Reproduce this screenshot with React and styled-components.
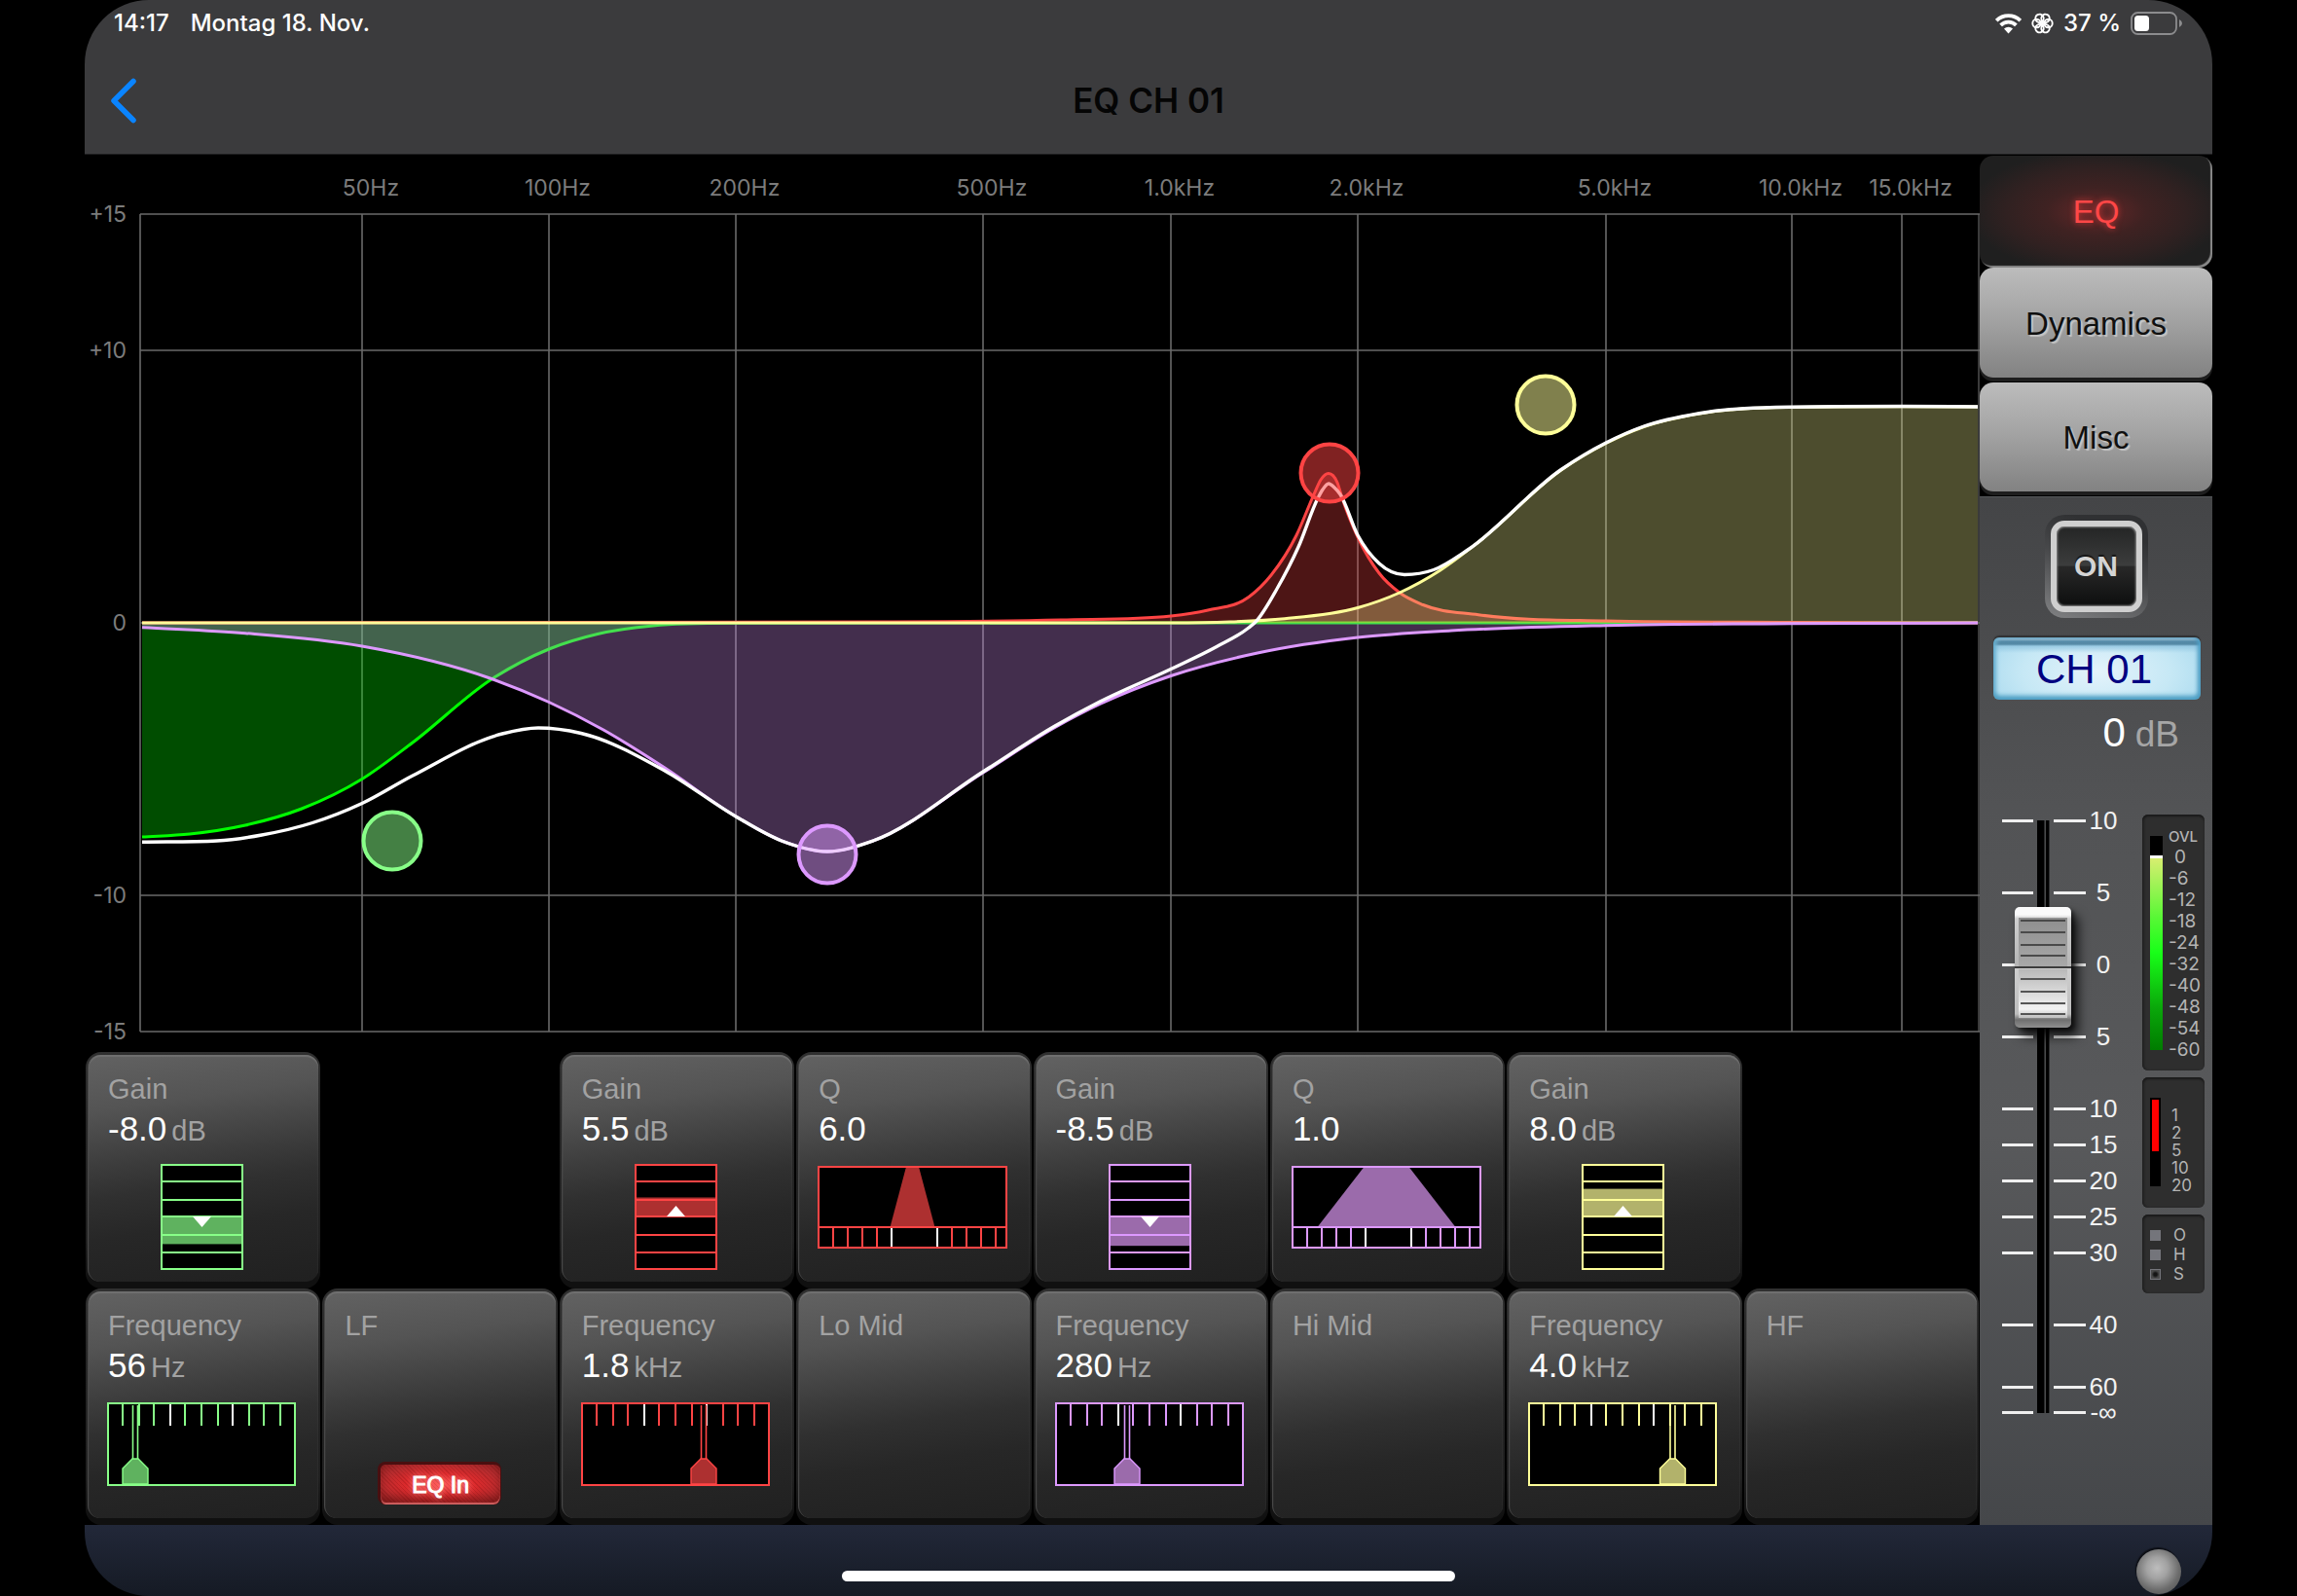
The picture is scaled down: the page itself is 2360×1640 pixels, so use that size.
import React, { useState } from "react";
import styled, { createGlobalStyle, css } from "styled-components";

const SANS = `"Liberation Sans", Arial, Helvetica, sans-serif`;
const SYSTEM = `Inter, Roboto, "Liberation Sans", sans-serif`;

const GREEN = "#88ff88";
const RED = "#ff4444";
const PURPLE = "#dd99ff";
const YELLOW = "#ffff99";

const GlobalStyle = createGlobalStyle`
  * { box-sizing: border-box; }
  body { margin: 0; background: #000; font-family: ${SANS}; }
  button { font-family: inherit; border: 0; padding: 0; cursor: pointer; }
`;

/* ---------- shell ---------- */

const Page = styled.div`
  min-height: 100vh;
  padding: 0 87px;
  background: #000;
  display: flex;
`;

const Device = styled.div`
  flex: 1;
  min-width: 0;
  display: flex;
  flex-direction: column;
  background: #000;
  border-radius: 66px;
  overflow: hidden;
`;

const Header = styled.header`
  background: #3b3b3d;
  border-bottom: 1px solid #1c1c1e;
  color: #fff;
`;

const StatusBar = styled.div`
  height: 48px;
  padding: 0 30px;
  display: flex;
  align-items: center;
  justify-content: space-between;
  font: 500 24px/28px ${SYSTEM};
`;

const StatusGroup = styled.div`
  display: flex;
  align-items: center;
  gap: ${(p) => p.$gap}px;
`;

const NavBar = styled.div`
  height: 110px;
  padding: 0 20px;
  display: grid;
  grid-template-columns: 1fr auto 1fr;
  align-items: center;
`;

const BackButton = styled.button`
  width: 40px;
  height: 60px;
  background: none;
  display: flex;
  align-items: center;
  justify-content: center;
`;

const Title = styled.h1`
  margin: 0;
  color: #050505;
  font: 600 35px/40px ${SYSTEM};
`;

const Main = styled.main`
  display: grid;
  grid-template-columns: minmax(0, 1fr) 239px;
`;

const Workspace = styled.section`
  min-width: 0;
  display: flex;
  flex-direction: column;
`;

const ChartSvg = styled.svg`
  display: block;
  width: 100%;
  height: auto;
  text {
    font: 400 23px ${SYSTEM};
    fill: #7c7c7c;
  }
`;

const Footer = styled.footer`
  flex: 1;
  min-height: 73px;
  padding-right: 32px;
  background: linear-gradient(#222839, #151a24);
  display: grid;
  grid-template-columns: 1fr 630px 1fr;
  align-items: end;
`;

const HomeIndicator = styled.div`
  grid-column: 2;
  height: 11px;
  margin: 0 -16px 15px 16px;
  border-radius: 6px;
  background: #fff;
`;

const Knob = styled.button`
  justify-self: end;
  width: 46px;
  height: 46px;
  margin-bottom: 2px;
  border-radius: 50%;
  background: radial-gradient(circle at 46% 42%, #bdbdbd 0, #a2a2a2 30%, #6c6c6c 62%, #484848 100%);
  box-shadow: -1px -2px 1px #0d0f15;
`;

/* ---------- parameter tiles ---------- */

const Tiles = styled.div`
  display: grid;
  grid-template-columns: repeat(8, minmax(0, 1fr));
  grid-auto-rows: 243px;
`;

const TileFrame = styled.section`
  grid-column: ${(p) => p.$column};
  grid-row: ${(p) => p.$row};
  margin: 0 1px;
  padding: 3px 2px 7px;
  border-radius: 16px;
  background: linear-gradient(#303030, #262626 30%, #202020 80%, #101010 97%);
  display: flex;
`;

const TileFace = styled.div`
  flex: 1;
  min-width: 0;
  padding: 17px 22px 0 20px;
  border-radius: 13px;
  border-left: 1px solid #484848;
  box-shadow: inset 0 2px 1px #707070;
  background: linear-gradient(172deg, #626262 0, #545454 22%, #3c3c3c 44%, #303030 56%, #272727 72%, #202020 100%);
  display: flex;
  flex-direction: column;
`;

const TileLabel = styled.div`
  color: #a2a2a2;
  font-size: 29px;
  line-height: 36px;
`;

const Reading = styled.div`
  display: flex;
  align-items: baseline;
  gap: 5px;
  color: #fff;
  font-size: 35px;
  line-height: 46px;
`;

const Unit = styled.span`
  color: #a2a2a2;
  font-size: 29px;
  line-height: 36px;
`;

const Glyph = styled.svg`
  display: block;
  flex: none;
  align-self: ${(p) => (p.$center ? "center" : "flex-start")};
  margin-top: ${(p) => (p.$center ? 13 : 15)}px;
  margin-left: -1px;
`;

const LampButton = styled.button`
  align-self: center;
  width: 127px;
  height: 44px;
  margin-top: 122px;
  border-radius: 8px;
  border: solid #4a0f10;
  border-width: 3px 1px 0 3px;
  background:
    repeating-linear-gradient(45deg, rgba(90, 0, 0, 0.16) 0 1px, transparent 1px 3px),
    radial-gradient(ellipse at 50% 50%, #ff4a48 0, #e02a2c 38%, #b52c2e 72%, #8c2122 100%);
  box-shadow: inset 0 -2px 1px #d06060, inset 0 -8px 8px rgba(70, 0, 0, 0.35);
  color: #fff;
  font-size: 23px;
  line-height: 38px;
  -webkit-text-stroke: 1px #fff;
  text-shadow: 0 0 7px #ffb0b0;
`;

/* ---------- sidebar ---------- */

const Sidebar = styled.aside`
  display: flex;
  flex-direction: column;
`;

const Tabs = styled.nav`
  padding-top: 1px;
  height: 351px;
  display: grid;
  grid-template-rows: 115px 118px 117px;
  background: #000;
`;

const TabButton = styled.button`
  border-radius: 14px;
  color: #101010;
  font-size: 33px;
  line-height: 40px;
  ${(p) =>
    p.$active
      ? css`
          color: #ff4747;
          text-shadow: 0 0 6px rgba(255, 60, 60, 0.7);
          background: radial-gradient(ellipse at 50% 50%, #652728 0, #3f2222 30%, #302121 55%, #1f1f1f 78%);
          box-shadow: inset -2px -2px 1px #8a8a8a;
        `
      : css`
          margin-bottom: 5px;
          padding-top: 2px;
          text-shadow: 2px 2px 1px rgba(225, 225, 225, 0.6);
          background: linear-gradient(#bcbcbc, #a4a4a4 45%, #828282);
          box-shadow: 0 4px 0 #1e1e1e;
        `}
`;

const Strip = styled.section`
  flex: 1;
  display: flex;
  flex-direction: column;
  background: linear-gradient(#444547, #525355 30%, #58595b 62%, #45474a);
  border-top: 1px solid #55575a;
`;

const OnButton = styled.button`
  align-self: center;
  width: 106px;
  height: 106px;
  margin-top: 18px;
  padding: 6px;
  border-radius: 20px;
  background: linear-gradient(200deg, #303133 20%, #47484a 50%, #818284);
`;

const OnFace = styled.span`
  display: block;
  height: 94px;
  border-radius: 14px;
  border: 6px solid #cfcfcf;
  box-shadow: inset 0 0 2px 1px #8c8c8c;
  background: linear-gradient(#242525, #3c3d3d 49%, #282828 50%, #0d0e0e);
  color: #d4d4d4;
  font-weight: 700;
  font-size: 30px;
  line-height: 82px;
  text-shadow: 0 -2px 1px #151515;
`;

const ChannelName = styled.div`
  height: 64px;
  margin: 20px 12px 0 14px;
  padding-right: 6px;
  border-radius: 6px;
  background:
    linear-gradient(rgba(150, 180, 200, 0.95) 0 2px, rgba(74, 128, 158, 0.9) 4px 7px, rgba(143, 196, 224, 0.8) 9px, transparent 16px),
    radial-gradient(ellipse 60% 100% at 50% 55%, #e4f3fb 0, #c6e8f5 60%, #a8d9ee 100%);
  box-shadow: inset 0 -4px 5px #4d9fc4, inset -3px 0 4px #4f9cc2, inset 3px 0 4px #79b8d4, 0 -2px 1px #303133;
  color: #000080;
  text-align: center;
  font-size: 42px;
  line-height: 66px;
`;

const Level = styled.output`
  display: flex;
  justify-content: flex-end;
  align-items: baseline;
  gap: 10px;
  height: 56px;
  margin-top: 6px;
  padding-right: 34px;
  color: #fff;
  font-size: 42px;
  line-height: 56px;
`;

const LevelUnit = styled.span`
  color: #a6a6a6;
  font-size: 37px;
`;

const Controls = styled.div`
  margin-top: 49px;
  padding-left: 23px;
  padding-right: 8px;
  display: flex;
  justify-content: space-between;
  align-items: flex-start;
`;

const Fader = styled.div`
  display: grid;
  grid-template-columns: 122px;
  align-items: start;
  > * { grid-area: 1 / 1; }
`;

const Scale = styled.ol`
  list-style: none;
  margin: 0;
  padding: 0;
`;

const ScaleRow = styled.li`
  height: 26px;
  margin-top: ${(p) => p.$gap}px;
  display: grid;
  grid-template-columns: 32px 21px 33px 36px;
  align-items: center;
  color: #f2f2f2;
  font-size: 26px;
  line-height: 26px;
  text-align: center;
`;

const Tick = styled.i`
  height: 3px;
  background: #efefef;
  &:nth-child(2) { grid-column: 3; }
`;

const Track = styled.div`
  justify-self: start;
  width: 13px;
  height: 609px;
  margin: 13px 0 0 36px;
  background: linear-gradient(90deg, #000 0 7px, #2a2b2c 7px 8px, #4a4b4c 8px 9px, #000 9px 12px, #2f3031 12px);
`;

const FaderInput = styled.input`
  appearance: none;
  -webkit-appearance: none;
  writing-mode: vertical-lr;
  direction: rtl;
  justify-self: start;
  width: 58px;
  height: 733px;
  margin: -49px 0 -62px 13px;
  background: transparent;
  &::-webkit-slider-runnable-track {
    width: 58px;
    height: 733px;
    background: transparent;
  }
  &::-webkit-slider-thumb {
    appearance: none;
    -webkit-appearance: none;
    width: 58px;
    height: 124px;
    border: 0;
    border-radius: 5px;
    box-shadow: 7px 9px 12px rgba(0, 0, 0, 0.75), 3px 3px 4px rgba(0, 0, 0, 0.5);
    background:
      linear-gradient(#4a4a4a, #4a4a4a) 50% 13px / 46px 2px no-repeat,
      linear-gradient(#4a4a4a, #4a4a4a) 50% 25px / 46px 2px no-repeat,
      linear-gradient(#4a4a4a, #4a4a4a) 50% 38px / 46px 2px no-repeat,
      linear-gradient(#4a4a4a, #4a4a4a) 50% 49px / 46px 2px no-repeat,
      linear-gradient(#3c3c3c, #3c3c3c) 50% 61px / 58px 2px no-repeat,
      linear-gradient(#555, #555) 50% 73px / 46px 2px no-repeat,
      linear-gradient(#555, #555) 50% 86px / 46px 2px no-repeat,
      linear-gradient(#555, #555) 50% 98px / 46px 2px no-repeat,
      linear-gradient(#555, #555) 50% 109px / 46px 2px no-repeat,
      linear-gradient(#8f8f8f, #a8a8a8) 50% 11px / 50px 50px no-repeat,
      linear-gradient(#b8b8b8, #f2f2f2 82%, #bdbdbd) 50% 64px / 50px 50px no-repeat,
      linear-gradient(#fafafa 0 8px, #cfcfcf 12px, #b5b5b5 60px, #cfcfcf 63px, #bdbdbd 110px, #6f6f6f 116px, #8f8f8f);
  }
`;

const Meters = styled.div`
  display: flex;
  flex-direction: column;
  gap: 7px;
  margin-top: 7px;
  width: 64px;
`;

const MeterPanel = styled.div`
  height: ${(p) => p.$height}px;
  padding: ${(p) => p.$top}px 0 0 8px;
  border-radius: 6px;
  background: #2e2e2e;
  box-shadow: inset 0 2px 2px #1b1b1b, inset 2px 0 2px #242424;
  display: grid;
  grid-template-columns: ${(p) => p.$bar}px 1fr;
  column-gap: ${(p) => p.$gap}px;
  align-items: start;
  color: #b4b4b4;
  font-family: ${SYSTEM};
`;

const LevelBar = styled.div`
  height: 220px;
  border-top: 20px solid #000;
  background: linear-gradient(#fff 0 3px, #d8ee70 3px, #58f835 32%, #18ff18 50%, #0aa80a 78%, #007c00);
`;

const ReductionBar = styled.div`
  height: 91px;
  padding: 2px;
  background: #000;
`;

const ReductionFill = styled.div`
  height: 53px;
  background: #ff0000;
`;

const MeterLabels = styled.div`
  display: flex;
  flex-direction: column;
  margin-top: ${(p) => p.$offset}px;
  font-size: ${(p) => p.$size}px;
  line-height: ${(p) => p.$pitch}px;
`;

const Overload = styled.span`
  font-size: 15px;
  font-weight: 500;
  line-height: 20px;
`;

const ZeroMark = styled.span`
  padding-left: 6px;
`;

const Lamps = styled.div`
  display: flex;
  flex-direction: column;
  gap: 9px;
`;

const Lamp = styled.i`
  width: 11px;
  height: 11px;
  background: ${(p) => (p.$off ? "radial-gradient(#151515 25%, #4a4a4a 60%)" : "#74757b")};
  border: ${(p) => (p.$off ? "1px solid #74757b" : "0")};
`;

/* ---------- response chart ---------- */

const FREQUENCIES = [
  [372, "50Hz"], [564, "100Hz"], [756, "200Hz"], [1010, "500Hz"], [1203, "1.0kHz"],
  [1395, "2.0kHz"], [1650, "5.0kHz"], [1841, "10.0kHz"], [1954, "15.0kHz"],
];
const GAINS = [[220, "+15"], [360, "+10"], [640, "0"], [920, "-10"], [1060, "-15"]];

const CURVES = {
  low: [[146, 860], [195, 857], [252, 848], [310, 831], [372, 800.5], [424, 763], [505, 698], [564, 667], [614, 651.5], [671, 643], [756, 640.3], [1203, 640], [2032, 640]],
  hiMid: [[146, 644.7], [252, 650.7], [372, 664], [505, 697.5], [564, 721.5], [620, 750], [683, 789], [756, 839], [803, 864], [850, 875], [897, 864], [1010, 794], [1083, 748], [1130, 723.5], [1203, 694.5], [1292, 671], [1395, 655], [1491, 648], [1650, 642.7], [1841, 640.7], [2032, 640]],
  loMid: [[146, 640], [900, 639], [1090, 637], [1203, 633], [1241, 627], [1283, 613.5], [1306, 591], [1332, 550], [1350, 508], [1357, 493], [1365, 486.5], [1374, 496], [1379, 512], [1395, 552], [1417, 589], [1438, 609], [1462, 621.5], [1519, 631.7], [1650, 638], [1841, 639.5], [2032, 640]],
  high: [[146, 640], [1203, 640], [1264, 639], [1320, 635.7], [1395, 624.5], [1438, 609], [1479, 586.5], [1519, 557], [1604, 483], [1650, 455.5], [1689, 438.5], [1746, 425], [1841, 418.5], [1954, 417.7], [2032, 418]],
  sum: [[146, 865.3], [223, 864], [269, 858], [321, 845.5], [372, 825.5], [424, 797], [516, 754], [553, 748], [597, 753.5], [683, 792], [756, 839], [803, 864], [850, 875], [897, 864], [1010, 793], [1083, 746.5], [1130, 721], [1203, 687.5], [1250, 664.5], [1283, 645], [1290, 639], [1312, 605], [1334, 562], [1354, 512], [1359, 503], [1365, 497], [1371, 501], [1377, 508], [1395, 550], [1417, 579], [1443, 590.5], [1473, 585.5], [1508, 565], [1604, 482.5], [1650, 455], [1689, 438], [1746, 424.7], [1841, 418.2], [1954, 417.5], [2032, 418]],
};

/* cubic interpolation with parabolic tangents, limited so that no curve overshoots a sample */
function smoothPath(points) {
  const n = points.length;
  const slope = [];
  for (let i = 0; i < n - 1; i++) {
    slope.push((points[i + 1][1] - points[i][1]) / (points[i + 1][0] - points[i][0]));
  }
  const tangent = points.map((_, i) => {
    if (i === 0) return slope[0];
    if (i === n - 1) return slope[n - 2];
    const a = slope[i - 1];
    const b = slope[i];
    if (a * b <= 0) return 0;
    const h0 = points[i][0] - points[i - 1][0];
    const h1 = points[i + 1][0] - points[i][0];
    const m = (h1 * a + h0 * b) / (h0 + h1);
    return Math.sign(m) * Math.min(Math.abs(m), 3 * Math.abs(a), 3 * Math.abs(b));
  });
  let d = `M${points[0][0]} ${points[0][1]}`;
  for (let i = 0; i < n - 1; i++) {
    const [x0, y0] = points[i];
    const [x1, y1] = points[i + 1];
    const h = (x1 - x0) / 3;
    d += `C${x0 + h} ${y0 + tangent[i] * h} ${x1 - h} ${y1 - tangent[i + 1] * h} ${x1} ${y1}`;
  }
  return d;
}

const BANDS = [
  { key: "low", stroke: "#00ff00" },
  { key: "loMid", stroke: RED },
  { key: "hiMid", stroke: PURPLE },
  { key: "high", stroke: YELLOW },
];

const HANDLES = [
  [403, 864, GREEN], [1366, 486, RED], [850, 878, PURPLE], [1588, 416, YELLOW],
];

function ResponseChart() {
  return (
    <ChartSvg viewBox="87 159 1947 922" role="img" aria-label="EQ frequency response">
      <g stroke="#6a6a6a" strokeWidth="1.6">
        <line x1="144" x2="144" y1="220" y2="1060" />
        <line x1="2033" x2="2033" y1="220" y2="1060" stroke="#4a4a4a" />
        {FREQUENCIES.map(([x]) => <line key={x} x1={x} x2={x} y1="220" y2="1060" />)}
        {GAINS.map(([y]) => <line key={y} x1="144" x2="2034" y1={y} y2={y} />)}
      </g>
      {FREQUENCIES.map(([x, label]) => (
        <text key={x} x={x + 9} y="201" textAnchor="middle">{label}</text>
      ))}
      {GAINS.map(([y, label]) => (
        <text key={y} x="130" y={y + 8} textAnchor="end">{label}</text>
      ))}
      {BANDS.map(({ key, stroke }) => {
        const d = smoothPath(CURVES[key]);
        return (
          <g key={key}>
            <path d={`${d}L2032 640L146 640Z`} fill={stroke} fillOpacity="0.3" />
            <path d={d} fill="none" stroke={stroke} strokeWidth="3" />
          </g>
        );
      })}
      <path d="M1760 641L2032 640" stroke={PURPLE} strokeWidth="2.4" />
      <path d={smoothPath(CURVES.sum)} fill="none" stroke="#fff" strokeWidth="3.4" />
      {HANDLES.map(([x, y, color]) => (
        <circle key={x} cx={x} cy={y} r="29.5" fill={color} fillOpacity="0.5" stroke={color} strokeWidth="4" />
      ))}
    </ChartSvg>
  );
}

/* ---------- tile drawings ---------- */

const SHADE = { [GREEN]: "#5fb25f", [RED]: "#ad3030", [PURPLE]: "#9b6bab", [YELLOW]: "#b2b26b" };

function GainGlyph({ gain, color }) {
  const middle = 54;
  const extent = Math.abs(gain) * 3.55;
  const top = gain > 0 ? middle - extent : middle;
  return (
    <Glyph $center width="85" height="109" viewBox="0 0 85 109" aria-hidden="true">
      <rect x="1" y="1" width="83" height="107" fill="#000" />
      <rect x="1" y={top} width="83" height={extent} fill={SHADE[color]} />
      <g stroke={color} strokeWidth="2" fill="none">
        {[18, 37, 54, 73, 91].map((y) => <line key={y} x1="1" x2="84" y1={y} y2={y} />)}
        <rect x="1" y="1" width="83" height="107" />
      </g>
      <path d={gain > 0 ? "M33 54L42.5 43L52 54Z" : "M33 54L42.5 65L52 54Z"} fill="#fff" />
    </Glyph>
  );
}

function QGlyph({ top, bottom, color }) {
  const ticks = [16, 31, 46, 61, 76, 123, 138, 153, 168, 183];
  return (
    <Glyph width="195" height="85" viewBox="0 0 195 85" aria-hidden="true">
      <rect x="1" y="1" width="193" height="83" fill="#000" />
      <path d={`M${97.5 - top} 1H${97.5 + top}L${97.5 + bottom} 63H${97.5 - bottom}Z`} fill={SHADE[color]} />
      <g stroke={color} strokeWidth="2" fill="none">
        <line x1="1" x2="194" y1="63" y2="63" />
        {ticks.map((x) => (
          <line key={x} x1={x} x2={x} y1="64" y2="84" stroke={x === 76 || x === 123 ? "#fff" : color} />
        ))}
        <rect x="1" y="1" width="193" height="83" />
      </g>
    </Glyph>
  );
}

function FrequencyGlyph({ at, color }) {
  const ticks = [16, 33, 48, 65, 80, 97, 114, 129, 146, 161, 178];
  return (
    <Glyph width="194" height="86" viewBox="0 0 194 86" aria-hidden="true">
      <rect x="1" y="1" width="192" height="84" fill="#000" />
      <g stroke={color} strokeWidth="2" fill="none">
        {ticks.map((x) => (
          <line key={x} x1={x} x2={x} y1="2" y2="24" stroke={x === 65 || x === 129 ? "#fff" : color} />
        ))}
        <path d={`M${at - 2.5} 3V58M${at + 2.5} 3V58`} strokeWidth="1.6" />
        <path d={`M${at - 13} 84V68L${at - 3} 58H${at + 3}L${at + 13} 68V84Z`} fill={SHADE[color]} strokeWidth="1.4" />
        <rect x="1" y="1" width="192" height="84" />
      </g>
    </Glyph>
  );
}

function Tile({ column, row, label, value, unit, children }) {
  return (
    <TileFrame $column={column} $row={row}>
      <TileFace>
        <TileLabel>{label}</TileLabel>
        {value && (
          <Reading>
            {value}
            {unit && <Unit>{unit}</Unit>}
          </Reading>
        )}
        {children}
      </TileFace>
    </TileFrame>
  );
}

/* ---------- status icons ---------- */

function WifiIcon() {
  return (
    <svg width="27" height="21" viewBox="0 0 27 21" aria-hidden="true">
      <g fill="none" stroke="#fff" strokeWidth="3.8">
        <path d="M1.2 7.2A17.5 17.5 0 0 1 25.8 7.2" />
        <path d="M5.6 11.8A11.2 11.2 0 0 1 21.4 11.8" />
      </g>
      <path d="M9 15.6A6.4 6.4 0 0 1 18 15.6L13.5 20.4Z" fill="#fff" />
    </svg>
  );
}

function FlowerIcon() {
  return (
    <svg width="23" height="22" viewBox="-11.5 -11 23 22" aria-hidden="true">
      <g fill="none" stroke="#fff" strokeWidth="1.9">
        {[0, 60, 120, 180, 240, 300].map((a) => (
          <circle key={a} cx="6" cy="0" r="4.2" transform={`rotate(${a})`} />
        ))}
      </g>
      <circle r="1.6" fill="#fff" />
    </svg>
  );
}

function BatteryIcon() {
  return (
    <svg width="54" height="24" viewBox="0 0 54 24" aria-hidden="true">
      <rect x="1" y="1" width="46" height="22" rx="6.5" fill="none" stroke="#8c8c8e" strokeWidth="1.8" />
      <rect x="4" y="4" width="15" height="16" rx="3.5" fill="#fff" />
      <path d="M50 8Q53 9.500 53 12T50 16Z" fill="#8c8c8e" />
    </svg>
  );
}

/* ---------- channel strip ---------- */

const SCALE = [
  ["10", 0], ["5", 48], ["0", 48], ["5", 48], ["10", 48], ["15", 11], ["20", 11],
  ["25", 11], ["30", 11], ["40", 48], ["60", 38], ["-∞", 0],
];

function ChannelStrip() {
  const [on, setOn] = useState(false);
  const [level, setLevel] = useState(752);
  return (
    <Strip>
      <OnButton type="button" aria-pressed={on} onClick={() => setOn(!on)}>
        <OnFace>ON</OnFace>
      </OnButton>
      <ChannelName>CH 01</ChannelName>
      <Level>
        0<LevelUnit>dB</LevelUnit>
      </Level>
      <Controls>
        <Fader>
          <Scale>
            {SCALE.map(([mark, gap], i) => (
              <ScaleRow key={i} $gap={gap}>
                <Tick />
                <Tick />
                <span>{mark}</span>
              </ScaleRow>
            ))}
          </Scale>
          <Track />
          <FaderInput
            type="range"
            min="0"
            max="1000"
            value={level}
            aria-label="CH 01 fader"
            onChange={(e) => setLevel(Number(e.target.value))}
          />
        </Fader>
        <Meters>
          <MeterPanel $height={263} $top={22} $bar={13} $gap={6}>
            <LevelBar />
            <MeterLabels $offset={-9} $size={19} $pitch={22}>
              <Overload>OVL</Overload>
              <ZeroMark>0</ZeroMark>
              {[6, 12, 18, 24, 32, 40, 48, 54, 60].map((n) => <span key={n}>-{n}</span>)}
            </MeterLabels>
          </MeterPanel>
          <MeterPanel $height={134} $top={21} $bar={11} $gap={11}>
            <ReductionBar>
              <ReductionFill />
            </ReductionBar>
            <MeterLabels $offset={9} $size={17} $pitch={18}>
              {[1, 2, 5, 10, 20].map((n) => <span key={n}>{n}</span>)}
            </MeterLabels>
          </MeterPanel>
          <MeterPanel $height={81} $top={16} $bar={11} $gap={13}>
            <Lamps>
              <Lamp />
              <Lamp />
              <Lamp $off />
            </Lamps>
            <MeterLabels $offset={-5} $size={17} $pitch={20}>
              {["O", "H", "S"].map((n) => <span key={n}>{n}</span>)}
            </MeterLabels>
          </MeterPanel>
        </Meters>
      </Controls>
    </Strip>
  );
}

export default function App() {
  const [tab, setTab] = useState("EQ");
  return (
    <>
      <GlobalStyle />
      <Page>
        <Device>
          <Header>
            <StatusBar>
              <StatusGroup $gap={22}>
                <span>14:17</span>
                <span>Montag 18. Nov.</span>
              </StatusGroup>
              <StatusGroup $gap={10}>
                <WifiIcon />
                <FlowerIcon />
                <span>37 %</span>
                <BatteryIcon />
              </StatusGroup>
            </StatusBar>
            <NavBar>
              <BackButton type="button" aria-label="Zurück">
                <svg width="28" height="47" viewBox="0 0 28 47" fill="none" stroke="#0a84ff" strokeWidth="5.500" strokeLinecap="round" strokeLinejoin="round">
                  <path d="M24 3.500L4 23.500L24 43.500" />
                </svg>
              </BackButton>
              <Title>EQ CH 01</Title>
            </NavBar>
          </Header>
          <Main>
            <Workspace>
              <ResponseChart />
              <Tiles>
                <Tile column={1} row={1} label="Gain" value="-8.0" unit="dB"><GainGlyph gain={-8} color={GREEN} /></Tile>
                <Tile column={3} row={1} label="Gain" value="5.5" unit="dB"><GainGlyph gain={5.5} color={RED} /></Tile>
                <Tile column={4} row={1} label="Q" value="6.0"><QGlyph top={6.5} bottom={23} color={RED} /></Tile>
                <Tile column={5} row={1} label="Gain" value="-8.5" unit="dB"><GainGlyph gain={-8.5} color={PURPLE} /></Tile>
                <Tile column={6} row={1} label="Q" value="1.0"><QGlyph top={23} bottom={71} color={PURPLE} /></Tile>
                <Tile column={7} row={1} label="Gain" value="8.0" unit="dB"><GainGlyph gain={8} color={YELLOW} /></Tile>
                <Tile column={1} row={2} label="Frequency" value="56" unit="Hz"><FrequencyGlyph at={29} color={GREEN} /></Tile>
                <Tile column={2} row={2} label="LF"><LampButton type="button" aria-pressed="true">EQ In</LampButton></Tile>
                <Tile column={3} row={2} label="Frequency" value="1.8" unit="kHz"><FrequencyGlyph at={126} color={RED} /></Tile>
                <Tile column={4} row={2} label="Lo Mid" />
                <Tile column={5} row={2} label="Frequency" value="280" unit="Hz"><FrequencyGlyph at={74} color={PURPLE} /></Tile>
                <Tile column={6} row={2} label="Hi Mid" />
                <Tile column={7} row={2} label="Frequency" value="4.0" unit="kHz"><FrequencyGlyph at={148.5} color={YELLOW} /></Tile>
                <Tile column={8} row={2} label="HF" />
              </Tiles>
            </Workspace>
            <Sidebar>
              <Tabs>
                {["EQ", "Dynamics", "Misc"].map((name) => (
                  <TabButton key={name} type="button" $active={tab === name} onClick={() => setTab(name)}>
                    {name}
                  </TabButton>
                ))}
              </Tabs>
              <ChannelStrip />
            </Sidebar>
          </Main>
          <Footer>
            <HomeIndicator />
            <Knob type="button" aria-label="Menü" />
          </Footer>
        </Device>
      </Page>
    </>
  );
}
